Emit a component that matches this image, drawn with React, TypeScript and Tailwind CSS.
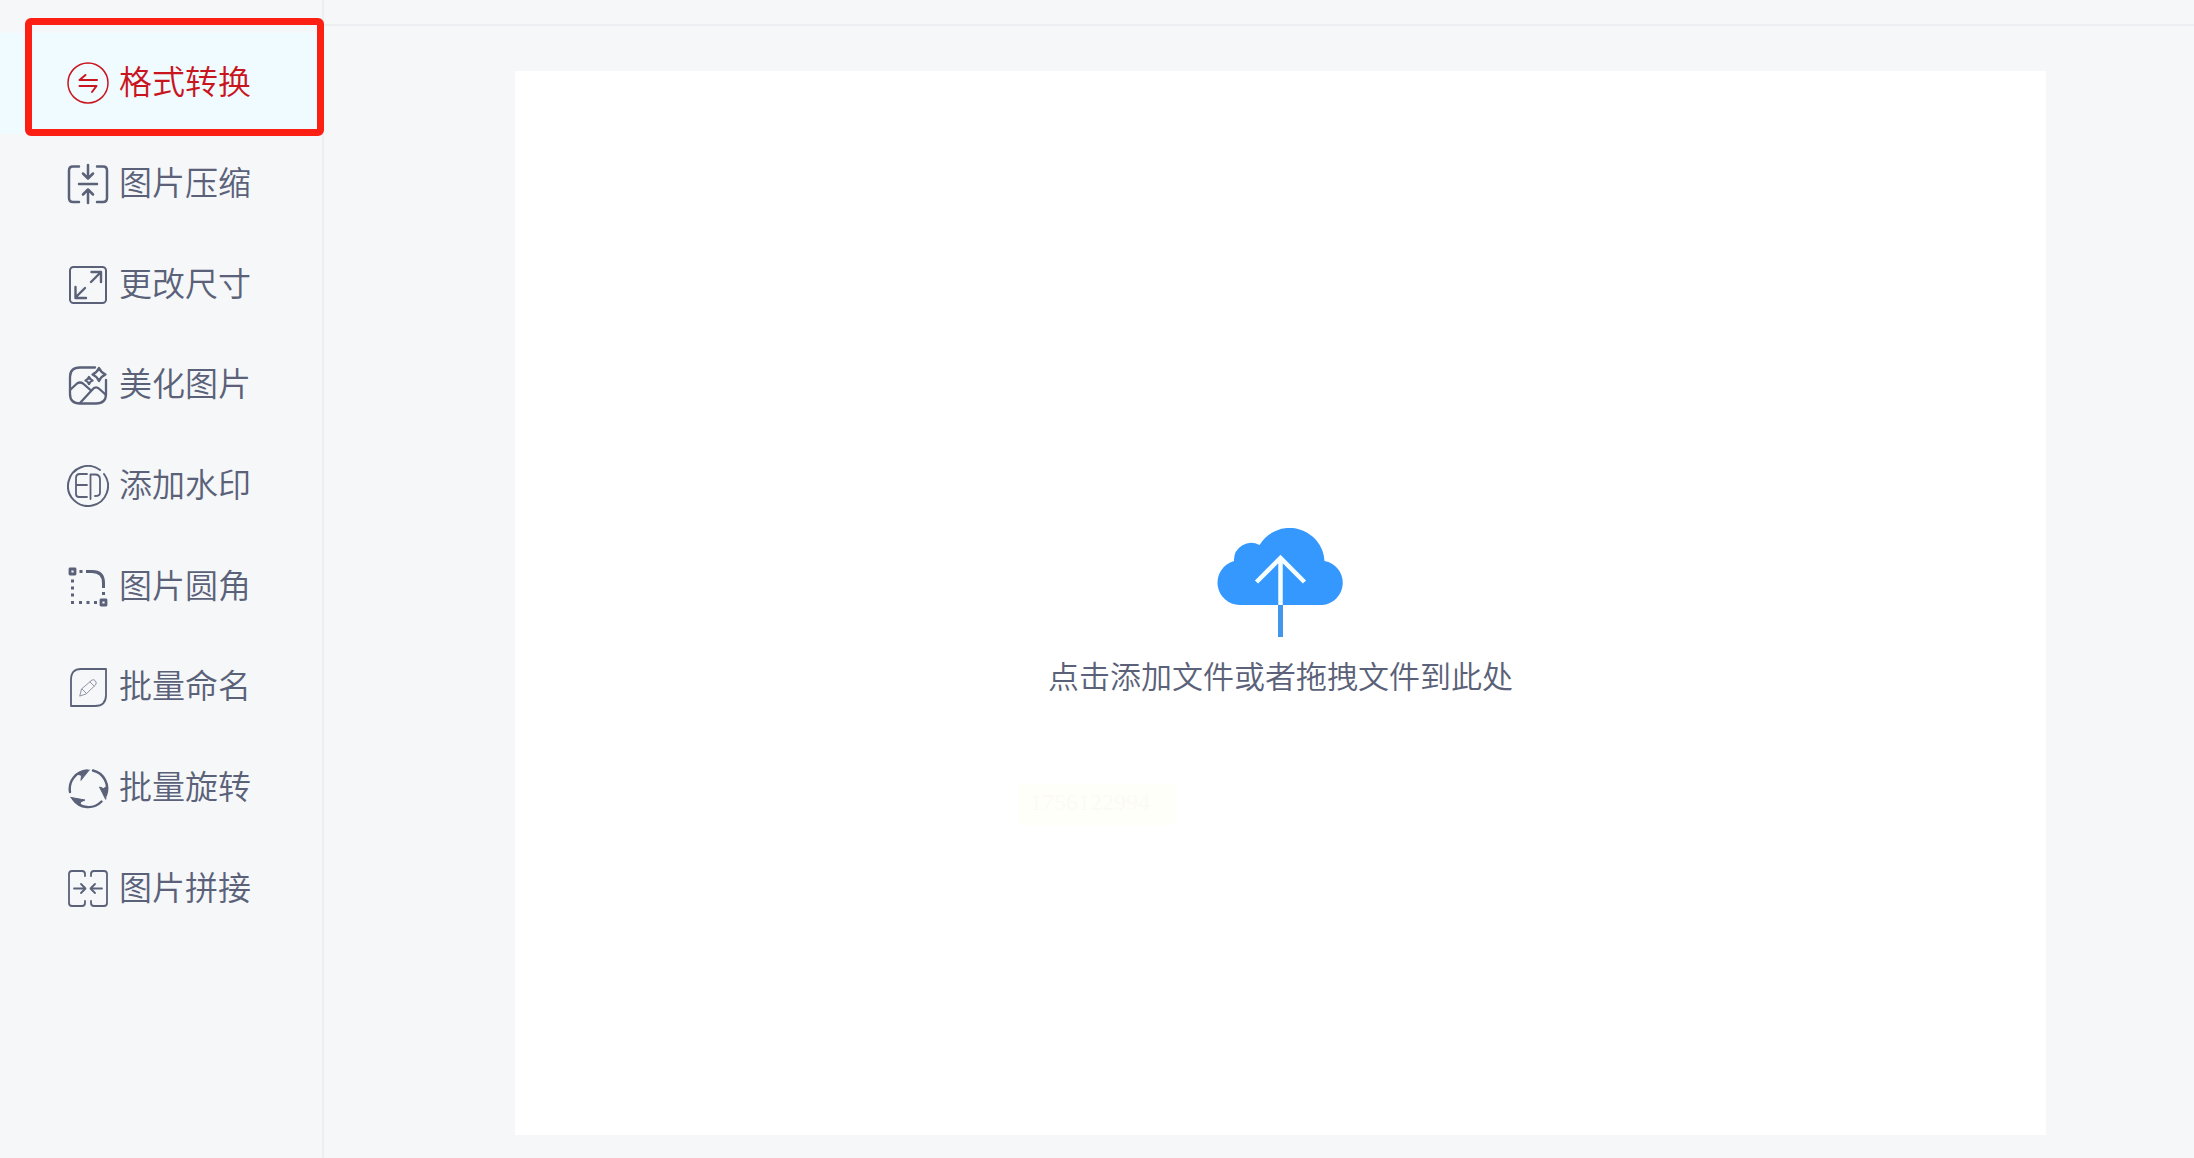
import type { ReactNode } from "react";

const stroke = {
  fill: "none",
  stroke: "currentColor",
  strokeWidth: 2,
  strokeLinecap: "round" as const,
  strokeLinejoin: "round" as const,
};

function Icon({ children }: { children: ReactNode }) {
  return (
    <svg viewBox="0 0 42 42" className="size-[42px] shrink-0" aria-hidden="true" {...stroke}>
      {children}
    </svg>
  );
}

const items: { label: string; icon: ReactNode }[] = [
  {
    label: "格式转换",
    icon: (
      <Icon>
        <circle cx="21" cy="21" r="20" strokeWidth="1.5" />
        <path d="M30 18H12.5L18.5 13M12.5 24H29.5L25 30" />
      </Icon>
    ),
  },
  {
    label: "图片压缩",
    icon: (
      <Icon>
        <g strokeWidth="2.5">
          <path d="M12 3.5H6Q2 3.5 2 7.5V35Q2 39 6 39H12M30 3.5H36Q40 3.5 40 7.5V35Q40 39 36 39H30" />
          <path d="M12 21H30M21 2V15M16 10.5L21 15.5L26 10.5M21 40V27M16 31.5L21 26.5L26 31.5" />
        </g>
      </Icon>
    ),
  },
  {
    label: "更改尺寸",
    icon: (
      <Icon>
        <rect x="3" y="3" width="36" height="36" rx="3.5" />
        <path d="M24 18L34 8M24.5 8H34V18M18 24L8.5 33.5M8.5 23V34H19" strokeWidth="2.4" />
      </Icon>
    ),
  },
  {
    label: "美化图片",
    icon: (
      <Icon>
        <g strokeWidth="2.3">
          <path d="M28 3.5H13Q3 3.5 3 13V30Q3 39.5 13 39.5H29Q39 39.5 39 30V16" />
          <path d="M3 26L10 19.5Q13 17.5 16 19.5L24 26.5M13 39L25 26Q29 21 33 25.5L39 31" />
          <path d="M32 4Q34 8.5 38.5 10.5Q34 12.5 32 17Q30 12.5 25.5 10.5Q30 8.5 32 4Z" />
          <path d="M22 13Q23 15.5 25.5 16.5Q23 17.5 22 20Q21 17.5 18.5 16.5Q21 15.5 22 13Z" />
        </g>
      </Icon>
    ),
  },
  {
    label: "添加水印",
    icon: (
      <Icon>
        <path d="M33 5A20 20 0 1 0 37 9" />
        <g strokeWidth="1.8">
          <path d="M20 9H13Q9 9 9 13V29Q9 32 12 32H20M9 20H20" />
          <path d="M23.5 34V9.5H28Q33 9.5 33 14.5V28Q33 31 28 31" />
        </g>
      </Icon>
    ),
  },
  {
    label: "图片圆角",
    icon: (
      <Icon>
        <g strokeLinecap="butt">
          <rect x="3" y="3" width="5" height="5" strokeWidth="2.8" />
          <rect x="34" y="34" width="5" height="5" strokeWidth="2.8" />
          <path d="M19 5.5H25Q36.5 5.5 36.5 17V22" strokeWidth="3" />
          <path
            d="M12.5 5.5H15.5M36.5 26V29M5.5 13.5V16.5M5.5 20.5V23.5M5.5 27.5V30.5M4 36.5H7M12 36.5H15M19.5 36.5H22.5M27 36.5H30"
            strokeWidth="3"
          />
        </g>
      </Icon>
    ),
  },
  {
    label: "批量命名",
    icon: (
      <Icon>
        <path d="M14 3H39V29Q39 40 28 40H4V14Q4 3 14 3Z" strokeWidth="1.8" />
        <path
          d="M13 29L14.5 23L25 14Q27 13 28.5 15Q30 17 28.5 19L19 28L13 30ZM23 16L27 20M15 23L19 27"
          strokeWidth="1"
          opacity="0.65"
        />
      </Icon>
    ),
  },
  {
    label: "批量旋转",
    icon: (
      <Icon>
        <path
          d="M3 25A18.5 18.5 0 0 1 20 3.5M26 3.500A18.5 18.5 0 0 1 39 28M34.5 34.5A18.5 18.5 0 0 1 6 32"
          strokeWidth="2.4"
        />
        <g fill="currentColor" strokeWidth="1">
          <path d="M22 3L10.5 7L14.5 8.5L14 13Z" />
          <path d="M38.5 32L32.5 20L36.5 21.5L40 19.5Z" />
          <path d="M4 30.5L18 33L13.500 35L13 38.5Z" />
        </g>
      </Icon>
    ),
  },
  {
    label: "图片拼接",
    icon: (
      <Icon>
        <g strokeWidth="1.8">
          <path d="M18 8V6Q18 3 15 3H5Q2 3 2 6V35Q2 38 5 38H15Q18 38 18 35V33M24 8V6Q24 3 27 3H37Q40 3 40 6V35Q40 38 37 38H27Q24 38 24 35V33" />
          <path d="M7 20.5H18M14 16L18.5 20.5L14 25M35 20.5H24M28 16L23.5 20.5L28 25" />
        </g>
      </Icon>
    ),
  },
];

function CloudUpload() {
  return (
    <svg viewBox="0 0 128 110" className="h-[110px] w-32" aria-hidden="true">
      <path
        d="M22.5 77A22.4 22.4 0 0 1 17 33A17.2 17.2 0 0 1 42.5 17A35 35 0 0 1 107.5 33A22.2 22.2 0 0 1 105 77Z"
        fill="#3498ff"
      />
      <path d="M63.500 77V109" stroke="#4397ea" strokeWidth="5" />
      <path d="M63.500 77V30M39.500 54L63.500 30L87.500 54" fill="none" stroke="#f5fdff" strokeWidth="4.5" />
    </svg>
  );
}

export default function App() {
  return (
    <div className="flex min-h-screen bg-[#f5f7f9] font-['Noto_Sans_CJK_SC',sans-serif] font-[350] text-[#5a6178]">
      <aside className="relative w-[324px] shrink-0 border-r-2 border-[#eceef1] pt-[33px]">
        <nav className="grid min-h-[906px] auto-rows-fr">
          {items.map((item, i) => (
            <button
              key={item.label}
              type="button"
              aria-current={i === 0 ? "page" : undefined}
              className={
                i === 0
                  ? "flex items-center gap-[10px] bg-[#f0fbff] pl-[67px] text-[33px] leading-10 text-[#c9151e]"
                  : "flex items-center gap-[10px] pl-[67px] text-[33px] leading-10"
              }
            >
              {item.icon}
              <span className="pb-1.5">{item.label}</span>
            </button>
          ))}
        </nav>
        <div className="pointer-events-none absolute top-[18px] -right-0.5 left-[25px] h-[118px] rounded-md border-[7px] border-[#fb2013]" />
      </aside>

      <div className="flex min-w-0 flex-1 flex-col">
        <header className="h-[26px] border-b-2 border-[#eceef1]" />
        <main className="flex flex-1 pt-[45px] pr-[148px] pb-[23px] pl-[191px]">
          <button type="button" className="flex flex-1 flex-col items-center justify-center bg-white pt-4">
            <span className="relative flex flex-col items-center gap-[17px]">
              <CloudUpload />
              <span className="text-[31px] leading-10">点击添加文件或者拖拽文件到此处</span>
              <span className="absolute top-[256px] -left-[30px] h-[41px] w-[158px] bg-[#fffffa] pl-3 text-left font-['Liberation_Serif',serif] text-2xl leading-9 text-[#fbfbf4]">
                1756122994
              </span>
            </span>
          </button>
        </main>
      </div>
    </div>
  );
}
